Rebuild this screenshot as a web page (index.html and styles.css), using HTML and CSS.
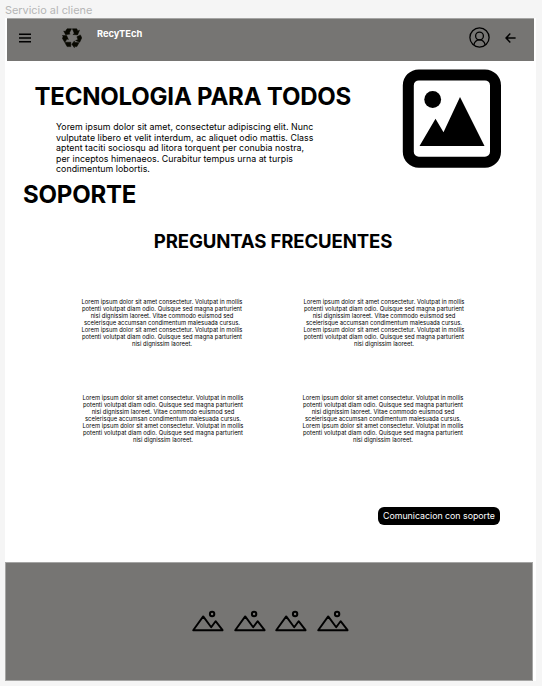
FILE: index.html
```html
<!DOCTYPE html>
<html lang="es">
<head>
<meta charset="utf-8">
<title>RecyTEch</title>
<link rel="stylesheet" href="styles.css">
</head>
<body>
<svg class="defs" width="0" height="0" aria-hidden="true">
  <symbol id="mountain" viewBox="0 0 33 22">
    <path d="M1.2 20.2 L11.2 6.4 L19.2 17.2 L23.6 11.2 L30.6 20.2 Z" fill="none" stroke="#000" stroke-width="1.9" stroke-linejoin="round"/>
    <circle cx="20.1" cy="4" r="2.2" fill="none" stroke="#000" stroke-width="2"/>
  </symbol>
</svg>
<p class="frame-label">Servicio al cliene</p>
<div class="frame">
  <header class="topbar">
    <svg class="menu" width="12" height="10" viewBox="0 0 12 10"><path d="M0 1.2H12M0 5H12M0 8.8H12" stroke="#000" stroke-width="1.4"/></svg>
    <svg class="recycle" width="20" height="20" viewBox="0 0 20 20">
      <g fill="#080800" stroke="#080800" stroke-width=".5" stroke-linejoin="round">
        <path d="M5.1 .8 H9.500 L7.200 5.2 L8.200 6 L3.6 6.7 L1.7 3 L3.2 3.5 Z"/>
        <path d="M10.400 .8 H14.7 L15.9 2.9 L17.500 2.2 L15.6 6.900 L10.9 6.5 L12.300 5.4 Z"/>
        <path d="M14.900 8.8 L18.3 6.9 L19.800 9.8 L17.7 14.3 L13.6 12.5 L16 11.6 Z"/>
        <path d="M17 14.8 L14.9 18.6 H12.4 V19.7 L9.800 16.2 L12.4 12.9 V14.2 Z"/>
        <path d="M3 14.800 L4 14.200 H8.8 V18.6 H5.1 Z"/>
        <path d="M.3 7.5 L4.6 7.4 L6.4 11.5 L5 10.9 L2.8 14.4 L.3 10.2 L1.2 8.800 Z"/>
      </g>
    </svg>
    <span class="brand">RecyTEch</span>
    <svg class="user" width="21" height="21" viewBox="0 0 21 21" fill="none" stroke="#000" stroke-width="1.3">
      <circle cx="10.5" cy="10.5" r="9.6"/><circle cx="10.5" cy="9" r="3.9"/><path d="M4.8 18 C5.5 14.8 7.6 12.9 10.5 12.9 S15.500 14.8 16.200 18"/>
    </svg>
    <svg class="back" width="11" height="10" viewBox="0 0 11 10" fill="none" stroke="#000" stroke-width="1.4"><path d="M10.600 5H1M5.300 .6L1 5L5.300 9.400"/></svg>
  </header>
  <main>
    <section class="hero">
      <div class="copy">
        <h1>TECNOLOGIA PARA TODOS</h1>
        <p>Yorem ipsum dolor sit amet, consectetur adipiscing elit. Nunc<br>vulputate libero et velit interdum, ac aliquet odio mattis. Class<br>aptent taciti sociosqu ad litora torquent per conubia nostra,<br>per inceptos himenaeos. Curabitur tempus urna at turpis<br>condimentum lobortis.</p>
      </div>
      <svg class="picture" width="99" height="99" viewBox="0 0 99 99">
        <rect x="6.300" y="5.900" width="87.200" height="87.300" rx="10.500" fill="#fff" stroke="#000" stroke-width="11"/>
        <circle cx="30.700" cy="30.500" r="8.400"/>
        <path d="M17.500 77 L33.500 49.700 L41.500 63.200 L58 28 L82.500 77 Z"/>
      </svg>
    </section>
    <h2 class="support">SOPORTE</h2>
    <h2 class="faq-title">PREGUNTAS FRECUENTES</h2>
    <section class="faq">
      <p>Lorem ipsum dolor sit amet consectetur. Volutpat in mollis<br>potenti volutpat diam odio. Quisque sed magna parturient<br>nisi dignissim laoreet. Vitae commodo euismod sed<br>scelerisque accumsan condimentum malesuada cursus.<br>Lorem ipsum dolor sit amet consectetur. Volutpat in mollis<br>potenti volutpat diam odio. Quisque sed magna parturient<br>nisi dignissim laoreet.</p>
      <p>Lorem ipsum dolor sit amet consectetur. Volutpat in mollis<br>potenti volutpat diam odio. Quisque sed magna parturient<br>nisi dignissim laoreet. Vitae commodo euismod sed<br>scelerisque accumsan condimentum malesuada cursus.<br>Lorem ipsum dolor sit amet consectetur. Volutpat in mollis<br>potenti volutpat diam odio. Quisque sed magna parturient<br>nisi dignissim laoreet.</p>
    </section>
    <section class="faq second">
      <p>Lorem ipsum dolor sit amet consectetur. Volutpat in mollis<br>potenti volutpat diam odio. Quisque sed magna parturient<br>nisi dignissim laoreet. Vitae commodo euismod sed<br>scelerisque accumsan condimentum malesuada cursus.<br>Lorem ipsum dolor sit amet consectetur. Volutpat in mollis<br>potenti volutpat diam odio. Quisque sed magna parturient<br>nisi dignissim laoreet.</p>
      <p>Lorem ipsum dolor sit amet consectetur. Volutpat in mollis<br>potenti volutpat diam odio. Quisque sed magna parturient<br>nisi dignissim laoreet. Vitae commodo euismod sed<br>scelerisque accumsan condimentum malesuada cursus.<br>Lorem ipsum dolor sit amet consectetur. Volutpat in mollis<br>potenti volutpat diam odio. Quisque sed magna parturient<br>nisi dignissim laoreet.</p>
    </section>
    <button class="contact" type="button">Comunicacion con soporte</button>
  </main>
  <footer>
    <svg width="33" height="22"><use href="#mountain"/></svg>
    <svg width="33" height="22"><use href="#mountain"/></svg>
    <svg width="33" height="22"><use href="#mountain"/></svg>
    <svg width="33" height="22"><use href="#mountain"/></svg>
  </footer>
</div>
</body>
</html>
```
FILE: styles.css
```css
* { box-sizing: border-box; margin: 0; padding: 0; }
body {
  width: 542px;
  height: 686px;
  overflow: hidden;
  background: #f5f5f5;
  color: #000;
  font-family: Inter, "Liberation Sans", sans-serif;
}
svg { display: block; flex: none; }
.defs { position: absolute; }
.frame-label {
  height: 18px;
  padding: 3px 0 0 5px;
  font-size: 10.9px;
  line-height: 15px;
  color: #b5b5b5;
  white-space: nowrap;
}
.frame {
  display: flex;
  flex-direction: column;
  width: 531px;
  height: 663px;
  margin-left: 5px;
  background: #fff;
}
.topbar {
  display: flex;
  width: 527px;
  height: 43px;
  margin-left: 2px;
  background: #767573;
  border-top: 1px solid #a5a5a4;
}
.menu { margin: 14px 0 0 12px; }
.recycle { margin: 9px 0 0 31px; }
.brand {
  margin: 9px 0 0 15px;
  font-size: 9.3px;
  line-height: 12px;
  font-weight: 700;
  color: #fff;
}
.user { margin: 8px 0 0 auto; }
.back { margin: 14px 18px 0 15px; }
main { display: flex; flex-direction: column; height: 501px; }
.hero { display: flex; justify-content: space-between; height: 112px; padding-right: 35px; }
.copy { padding: 21px 0 0 29.5px; white-space: nowrap; }
h1, .support {
  font-size: 24px;
  line-height: 30px;
  font-weight: 700;
  letter-spacing: -0.21px;
  white-space: nowrap;
}
.copy p { margin: 10px 0 0 21.5px; font-size: 8.8px; line-height: 10.6px; letter-spacing: 0.045px; }
.picture { margin-top: 8px; }
.support { margin: 7px 0 0 18px; }
.faq-title {
  margin: 19px 0 0 5px;
  font-size: 18.6px;
  line-height: 24px;
  letter-spacing: -0.15px;
  text-align: center;
  white-space: nowrap;
}
.faq {
  display: flex;
  gap: 60px;
  margin: 45px 0 0 76px;
  font-size: 5.85px;
  line-height: 7.02px;
  letter-spacing: 0.025px;
  text-align: center;
  white-space: nowrap;
}
.faq p { width: 162px; }
.faq.second { gap: 58px; margin: 46.4px 0 0 77px; }
.contact {
  align-self: flex-end;
  width: 122px;
  height: 18px;
  margin: 64.6px 36px 0 0;
  border: 0;
  border-radius: 6px;
  background: #000;
  color: #fff;
  font: 8.8px/18px Inter, "Liberation Sans", sans-serif;
  white-space: nowrap;
}
footer {
  display: flex;
  gap: 8.7px;
  width: 528px;
  height: 119px;
  padding: 47px 0 0 186px;
  background: #767573;
  border: 1px solid #a5a5a4;
}
```
